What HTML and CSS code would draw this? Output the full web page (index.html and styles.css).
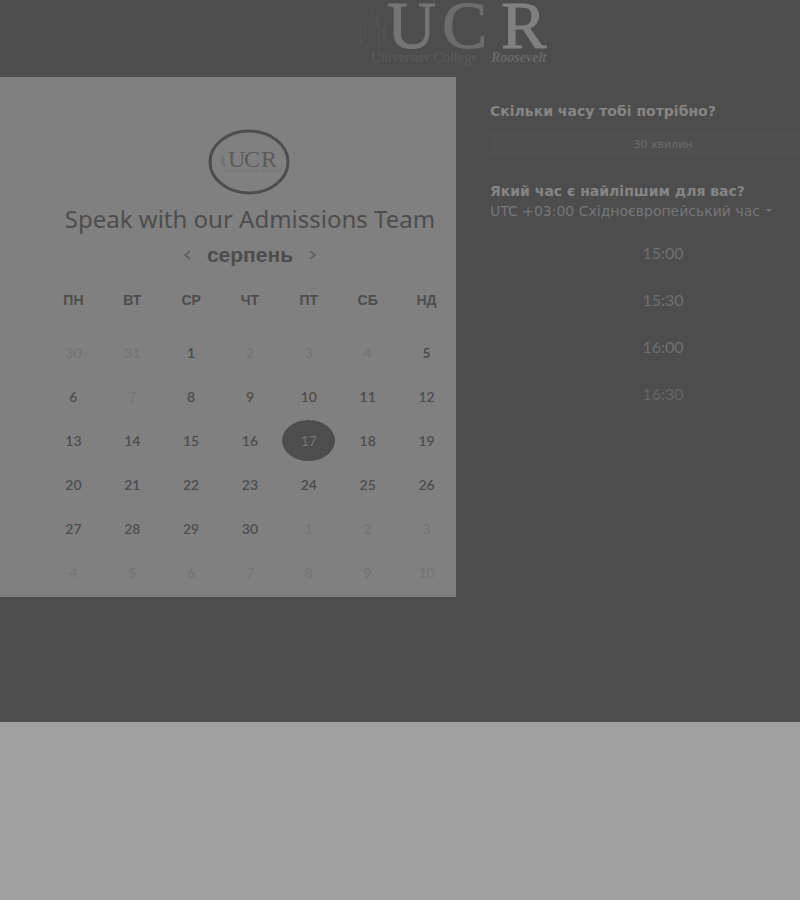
FILE: index.html
```
<!DOCTYPE html>
<html lang="uk">
<head>
<meta charset="utf-8">
<meta name="viewport" content="width=device-width, initial-scale=1">
<title>Speak with our Admissions Team</title>
<link rel="stylesheet" href="styles.css">
</head>
<body>
<div class="page">
  <header class="header">
    <svg class="logo" viewBox="0 0 200 68" role="img" aria-label="University College Roosevelt">
      <g class="logo-tower">
        <path d="M13 6v8M10 15l3-2M17 16v11M6 22l4-2M1 24v20M5 26v14M17 22l2 1v18M19 41v9M24 24v20"/>
      </g>
      <g class="logo-letters">
        <text x="27" y="48">U</text>
        <text class="logo-wide" x="82" y="48">C</text>
        <text class="logo-bright" x="141" y="48">R</text>
      </g>
      <text class="logo-caption" x="11" y="62">University College</text>
      <text class="logo-caption logo-strong" x="131" y="62">Roosevelt</text>
    </svg>
  </header>
  <main class="booking">
    <section class="calendar">
      <svg class="avatar" viewBox="0 0 84 66" role="img" aria-label="UCR">
        <ellipse cx="41" cy="33" rx="39" ry="31"/>
        <path d="M13 38v-8l2-4 2 4 1 8z"/>
        <text class="avatar-letters" x="20" y="38">U</text>
        <text class="avatar-letters" x="36" y="38">C</text>
        <text class="avatar-letters" x="53" y="38">R</text>
        <text class="avatar-caption" x="14" y="43">University College Roosevelt</text>
      </svg>
      <h1 class="title">Speak with our Admissions Team</h1>
      <div class="month">
        <button class="arrow" type="button" aria-label="Попередній місяць"><svg viewBox="0 0 8 10"><path d="M7 1 2 5l5 4"/></svg></button>
        <h2 class="month-name">серпень</h2>
        <button class="arrow" type="button" aria-label="Наступний місяць"><svg viewBox="0 0 8 10"><path d="m1 1 5 4-5 4"/></svg></button>
      </div>
      <table class="days">
        <thead>
          <tr><th>ПН</th><th>ВТ</th><th>СР</th><th>ЧТ</th><th>ПТ</th><th>СБ</th><th>НД</th></tr>
        </thead>
        <tbody>
          <tr><td><button disabled>30</button></td><td><button disabled>31</button></td><td><button class="strong">1</button></td><td><button disabled>2</button></td><td><button disabled>3</button></td><td><button disabled>4</button></td><td><button class="strong">5</button></td></tr>
          <tr><td><button>6</button></td><td><button disabled>7</button></td><td><button>8</button></td><td><button>9</button></td><td><button>10</button></td><td><button>11</button></td><td><button>12</button></td></tr>
          <tr><td><button>13</button></td><td><button>14</button></td><td><button>15</button></td><td><button>16</button></td><td><button class="selected" aria-pressed="true">17</button></td><td><button>18</button></td><td><button>19</button></td></tr>
          <tr><td><button>20</button></td><td><button>21</button></td><td><button>22</button></td><td><button>23</button></td><td><button>24</button></td><td><button>25</button></td><td><button>26</button></td></tr>
          <tr><td><button>27</button></td><td><button>28</button></td><td><button>29</button></td><td><button>30</button></td><td><button disabled>1</button></td><td><button disabled>2</button></td><td><button disabled>3</button></td></tr>
          <tr><td><button disabled>4</button></td><td><button disabled>5</button></td><td><button disabled>6</button></td><td><button disabled>7</button></td><td><button disabled>8</button></td><td><button disabled>9</button></td><td><button disabled>10</button></td></tr>
        </tbody>
      </table>
    </section>
    <section class="times">
      <h2 class="question">Скільки часу тобі потрібно?</h2>
      <button class="duration" type="button">30 хвилин</button>
      <h2 class="question"><label for="zone">Який час є найліпшим для вас?</label></h2>
      <div class="zone">
        <select id="zone"><option>UTC +03:00 Східноєвропейський час</option></select>
        <svg class="caret" viewBox="0 0 6 4"><path d="M0 0h6L3 3z"/></svg>
      </div>
      <div class="slots">
        <button type="button">15:00</button>
        <button type="button">15:30</button>
        <button type="button">16:00</button>
        <button class="dim" type="button">16:30</button>
      </div>
    </section>
  </main>
</div>
</body>
</html>
```
FILE: styles.css
```
* {
  box-sizing: border-box;
}

body {
  margin: 0;
  background: #a0a0a0;
  color: #4d4d4d;
  font-family: "Liberation Sans", sans-serif;
  overflow-x: hidden;
}

h1,
h2 {
  margin: 0;
}

button,
select {
  appearance: none;
  margin: 0;
  padding: 0;
  border: 0;
  background: none;
  color: inherit;
  font: inherit;
}

.page {
  padding-bottom: 125px;
  background: #4d4d4d;
}

.header {
  display: flex;
  justify-content: center;
  height: 77px;
  padding-left: 120px;
}

.logo {
  width: 200px;
  height: 68px;
  overflow: visible;
  font-family: "Liberation Serif", serif;
}

.logo-tower {
  fill: none;
  stroke: #585858;
}

.logo-letters {
  fill: #757575;
  stroke: #757575;
  font-size: 68px;
}

.logo-letters .logo-wide {
  fill: #6c6c6c;
  stroke: #6c6c6c;
}

.logo-letters .logo-bright {
  fill: #808080;
  stroke: #808080;
}

.logo-caption {
  fill: #5a5a5a;
  font-size: 14px;
}

.logo-strong {
  fill: #686868;
  font-style: italic;
  font-weight: bold;
}

.booking {
  display: grid;
  grid-template-columns: 57fr 43fr;
}

.calendar {
  display: flex;
  flex-direction: column;
  align-items: center;
  padding: 52px 0 3px 44px;
  background: #808080;
}

.avatar {
  width: 84px;
  height: 66px;
  fill: #757575;
  font-family: "Liberation Serif", serif;
}

.avatar ellipse {
  fill: none;
  stroke: #4d4d4d;
  stroke-width: 3px;
}

.avatar-letters {
  fill: #5a5a5a;
  font-size: 24px;
}

.avatar-caption {
  fill: #727272;
  font-size: 5px;
}

.title {
  margin-top: 8px;
  font-family: "Noto Sans", sans-serif;
  font-size: 24px;
  font-weight: 400;
  line-height: 32px;
  white-space: nowrap;
}

.month {
  display: flex;
  align-items: center;
  gap: 16px;
  margin-top: 8px;
}

.month-name {
  font-size: 21px;
  line-height: 24px;
}

.arrow {
  display: flex;
}

.arrow svg {
  width: 8px;
  height: 10px;
  fill: none;
  stroke: #636363;
  stroke-width: 2px;
}

.days {
  width: 100%;
  margin-top: 8px;
  border-collapse: collapse;
  table-layout: fixed;
}

.days th {
  height: 55px;
  padding: 0 0 6px;
  font-size: 14px;
}

.days td {
  height: 44px;
  padding: 0;
  text-align: center;
}

.days button {
  width: 53px;
  height: 41px;
  border-radius: 50%;
  font-family: Lato, sans-serif;
  font-size: 14px;
  font-weight: 600;
}

.days button:disabled {
  color: #737373;
  font-weight: 400;
}

.days .strong {
  font-weight: 700;
}

.days .selected {
  background: #4d4d4d;
  color: #757575;
  font-weight: 400;
}

.times {
  margin-right: -36px;
  padding: 24px 0 0 34px;
  color: #858585;
  font-family: "DejaVu Sans", sans-serif;
}

.question {
  font-size: 14px;
  line-height: 20px;
}

.duration {
  display: block;
  width: 100%;
  height: 26px;
  margin: 10px 0 24px;
  background: #4f4f4f;
  color: #6c6c6c;
  font-size: 11px;
}

.zone {
  display: flex;
  align-items: center;
  gap: 6px;
  height: 20px;
}

.zone select {
  color: #777777;
  font-size: 14px;
}

.caret {
  width: 6px;
  height: 4px;
  fill: #777777;
}

.slots {
  display: grid;
  grid-auto-rows: 47px;
  margin-top: 8px;
}

.slots button {
  color: #707070;
  font-family: Lato, sans-serif;
  font-size: 16px;
}

.slots .dim {
  color: #666666;
}
```
